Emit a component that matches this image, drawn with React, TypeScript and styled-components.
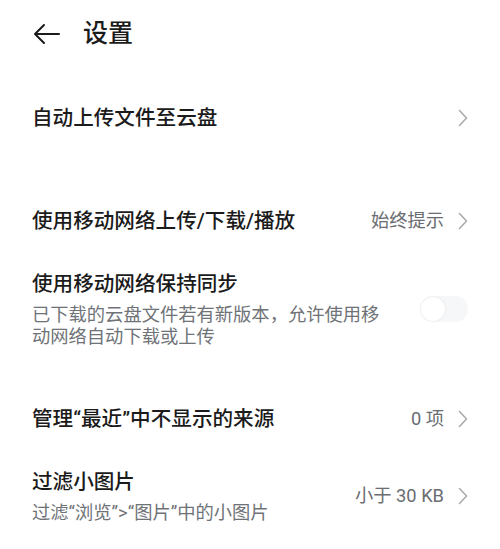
import styled, { createGlobalStyle } from "styled-components";

const GlobalStyle = createGlobalStyle`
  html, body {
    margin: 0;
    padding: 0;
    background: #ffffff;
  }
  body {
    font-family: Roboto, "Noto Sans CJK SC", "Noto Sans", sans-serif;
    color: #1b1b1b;
  }
`;

const Page = styled.div`
  width: 500px;
  min-height: 549px;
  background: #ffffff;
  overflow: hidden;
`;

const Header = styled.header`
  display: flex;
  align-items: center;
  height: 68px;
  padding-left: 32px;
`;

const BackButton = styled.button`
  display: flex;
  align-items: center;
  justify-content: center;
  width: 28px;
  height: 28px;
  padding: 0;
  margin-right: 23px;
  border: none;
  background: none;
  color: #1b1b1b;
`;

const Title = styled.h1`
  margin: 0;
  font-size: 25px;
  font-weight: 500;
  line-height: 32px;
`;

const Group = styled.section<{ $gap: number }>`
  display: flex;
  flex-direction: column;
  margin-top: ${(p) => p.$gap}px;
`;

const Row = styled.div`
  display: flex;
  align-items: center;
  min-height: 70px;
  padding: 14px 32px 14px 32px;
  box-sizing: border-box;
`;

const TextCol = styled.div<{ $narrow?: boolean }>`
  display: flex;
  flex-direction: column;
  flex: 1;
  min-width: 0;
  margin-right: ${(p) => (p.$narrow ? "37px" : "16px")};
`;

const Label = styled.div`
  font-size: 20.6px;
  font-weight: 500;
  line-height: 28px;
  color: #1b1b1b;
  white-space: nowrap;
`;

const Sub = styled.div`
  margin-top: 6px;
  font-size: 18.3px;
  line-height: 22px;
  color: #6f7378;
`;

const Value = styled.span`
  font-size: 18.3px;
  line-height: 24px;
  color: #6a6d71;
  white-space: nowrap;
`;

const Chevron = styled.svg`
  flex-shrink: 0;
  margin-left: 14px;
`;

const Track = styled.div`
  position: relative;
  flex-shrink: 0;
  width: 48px;
  height: 26px;
  border-radius: 13px;
  background: #f6f7f9;
`;

const Knob = styled.span`
  position: absolute;
  top: 1px;
  left: 1px;
  width: 24px;
  height: 24px;
  border-radius: 50%;
  background: #ffffff;
  box-shadow: 0 0 2px rgba(0, 0, 0, 0.1);
`;

function Arrow() {
  return (
    <Chevron width="10" height="18" viewBox="0 0 10 18" fill="none">
      <path d="M1.5 1.5 L8.5 9 L1.5 16.5" stroke="#a9abae" strokeWidth="1.6" strokeLinecap="round" strokeLinejoin="round" />
    </Chevron>
  );
}

function Switch() {
  return (
    <Track>
      <Knob />
    </Track>
  );
}

export default function App() {
  return (
    <Page>
      <GlobalStyle />
      <Header>
        <BackButton aria-label="返回">
          <svg width="27" height="22" viewBox="0 0 27 22" fill="none">
            <path d="M26 11 H2 M11 2 L2 11 L11 20" stroke="#1b1b1b" strokeWidth="2" strokeLinecap="round" strokeLinejoin="round" />
          </svg>
        </BackButton>
        <Title>设置</Title>
      </Header>

      <Group $gap={15}>
        <Row>
          <TextCol>
            <Label>自动上传文件至云盘</Label>
          </TextCol>
          <Arrow />
        </Row>
      </Group>

      <Group $gap={33}>
        <Row>
          <TextCol>
            <Label>使用移动网络上传/下载/播放</Label>
          </TextCol>
          <Value>始终提示</Value>
          <Arrow />
        </Row>
        <Row>
          <TextCol $narrow>
            <Label>使用移动网络保持同步</Label>
            <Sub>已下载的云盘文件若有新版本，允许使用移动网络自动下载或上传</Sub>
          </TextCol>
          <Switch />
        </Row>
      </Group>

      <Group $gap={22}>
        <Row>
          <TextCol>
            <Label>管理“最近”中不显示的来源</Label>
          </TextCol>
          <Value>0 项</Value>
          <Arrow />
        </Row>
        <Row>
          <TextCol>
            <Label>过滤小图片</Label>
            <Sub>过滤“浏览”&gt;“图片”中的小图片</Sub>
          </TextCol>
          <Value>小于 30 KB</Value>
          <Arrow />
        </Row>
      </Group>
    </Page>
  );
}
